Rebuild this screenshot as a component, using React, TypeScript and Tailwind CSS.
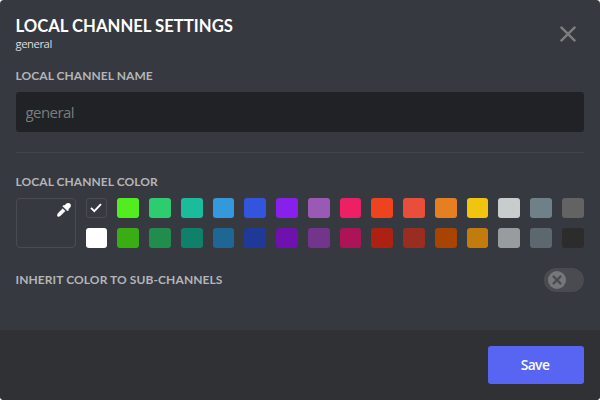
import React from "react";

const topRow = [
  "#53ed1f", "#2ecc71", "#1abc9c", "#3498db", "#3355dd", "#871fed", "#9b59b6", "#ed1f65",
  "#ed431f", "#e94d3c", "#e67e22", "#f1c40f", "#c7cccd", "#708088", "#636363",
];
const bottomRow = [
  "#ffffff", "#3aad14", "#218c4e", "#11806a", "#206694", "#203898", "#6d12ad", "#71368a", "#ad1457",
  "#ad2014", "#992d22", "#a84300", "#c27c0e", "#979c9f", "#5c686e", "#2c2c2c",
];

function Label({ children, spacing }: { children: React.ReactNode; spacing: string }) {
  return (
    <h2 className={`-ml-[0.5px] whitespace-nowrap font-['Lato',sans-serif] text-[12px] leading-4 font-bold text-[#b4b5b8] ${spacing}`}>
      {children}
    </h2>
  );
}

function Swatch({ color }: { color: string }) {
  return <button className="h-5 rounded-[3px]" style={{ backgroundColor: color }} />;
}

export default function App() {
  return (
    <div className="h-[400px] w-[600px] overflow-hidden bg-white">
      <div className="flex h-full flex-col overflow-hidden rounded-[4px] bg-[#36393f] font-['Open_Sans',sans-serif]">
        <header className="flex h-[68px] justify-between pt-4 pr-4 pl-[15.5px]">
          <div>
            <h1 className="font-['Lato',sans-serif] text-[16.7px] leading-5 font-bold whitespace-nowrap text-white">
              LOCAL CHANNEL SETTINGS
            </h1>
            <p className="text-[11.3px] leading-4 tracking-[-0.45px] text-[#dcddde]">general</p>
          </div>
          <button className="mt-0.5 flex size-8 items-center justify-center text-[#7d7e80]">
            <svg width="16" height="16" viewBox="0 0 16 16" fill="none" stroke="currentColor" strokeWidth="2.3">
              <path d="M.8.8 15.2 15.2M15.2.8.8 15.2" />
            </svg>
          </button>
        </header>
        <main className="flex flex-1 flex-col px-4">
          <Label spacing="tracking-[0.06px]">LOCAL CHANNEL NAME</Label>
          <input
            className="mt-2 h-10 w-full rounded-[3px] bg-[#202225] px-[9.5px] text-[15px] tracking-[-0.55px] outline-none placeholder:text-[#7b7c7f]"
            placeholder="general"
          />
          <div className="mt-5 border-t border-[#42454a]" />
          <div className="mt-[21px]">
            <Label spacing="tracking-[0.06px]">LOCAL CHANNEL COLOR</Label>
          </div>
          <div className="mt-2 flex gap-[9.5px]">
            <button className="flex h-[50px] w-[60px] shrink-0 justify-end rounded-[4px] border border-[#4b4c4f] pt-[4px] pr-[4px]">
              <svg width="14" height="14" viewBox="0 0 16 16" fill="white" stroke="white" strokeWidth="0.5">
                <path d="M14.994 1.006C13.858-.257 11.904-.3 10.72.89L8.637 2.975l-.696-.697-1.387 1.388 5.557 5.557 1.387-1.388-.697-.697 1.964-1.964c1.13-1.13 1.3-2.985.23-4.168zm-13.25 10.25c-.225.224-.408.48-.55.764L.02 14.37l1.39 1.39 2.35-1.174c.283-.14.54-.33.765-.55l4.808-4.808-2.776-2.776-4.813 4.803z" />
              </svg>
            </button>
            <div className="grid w-[498px] shrink-0 grid-cols-16 gap-[10px]">
              <button className="flex h-5 items-center justify-center rounded-[3px] border border-[#4b4c4f]">
                <svg className="shrink-0" width="12" height="10" viewBox="0 0 12 10" fill="none" stroke="white" strokeWidth="1.9">
                  <path d="M1 4.9 4.3 8.1 11 1.2" />
                </svg>
              </button>
              {topRow.map((c) => <Swatch key={c} color={c} />)}
              {bottomRow.map((c) => <Swatch key={c} color={c} />)}
            </div>
          </div>
          <div className="mt-5 flex h-6 items-center justify-between">
            <Label spacing="tracking-[0.09px]">INHERIT COLOR TO SUB-CHANNELS</Label>
            <button className="flex h-6 w-10 items-center rounded-full bg-[#494b51] pl-[3.5px]">
              <span className="flex size-[18px] items-center justify-center rounded-full bg-[#76777a] text-[#494b51]">
                <svg width="10" height="10" viewBox="0 0 9 9" fill="none" stroke="currentColor" strokeWidth="2">
                  <path d="m.8.8 7.4 7.4M8.2.8.8 8.2" />
                </svg>
              </span>
            </button>
          </div>
        </main>
        <footer className="flex h-[70px] shrink-0 items-center justify-end bg-[#303135] px-4">
          <button className="h-[38px] w-24 rounded-[3px] bg-[#5865f2] pr-0.5 text-[13.8px] font-semibold tracking-[-0.6px] text-white">
            Save
          </button>
        </footer>
      </div>
    </div>
  );
}
